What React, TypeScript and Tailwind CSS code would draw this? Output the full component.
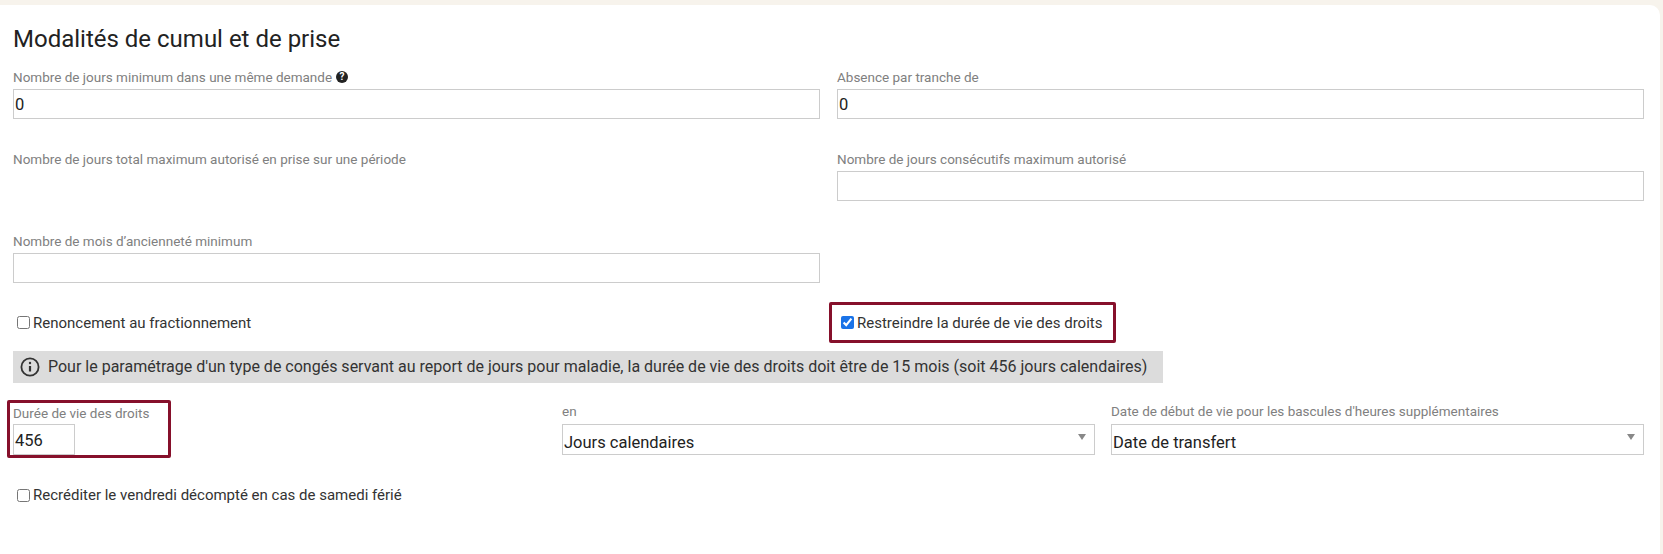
import React from "react";

const labelCls = "block text-[13.5px] leading-[18px] text-[#808080] font-normal";
const inputCls = "block w-full h-[30px] border border-[#cccccc] bg-white px-[1px] text-[16.5px] leading-[29px] text-[#222222]";

const Field = ({ label, value, children }: { label: string; value?: string; children?: React.ReactNode }) => (
  <div>
    <div className={`${labelCls} flex items-center gap-1 h-[18px] mb-[3px]`}>
      {label}
      {children}
    </div>
    <div className={inputCls}>{value}</div>
  </div>
);

const Select = ({ label, value }: { label: string; value: string }) => (
  <div>
    <div className={`${labelCls} h-[18px] mb-[4px]`}>{label}</div>
    <div className="relative h-[31px] border border-[#cccccc] bg-white px-[1px] text-[16.5px] leading-[35px] text-[#222222]">
      {value}
      <span className="absolute right-[8px] top-[9px] w-0 h-0 border-x-[4px] border-x-transparent border-t-[6px] border-t-[#888888]" />
    </div>
  </div>
);

const Check = ({ label, checked }: { label: string; checked?: boolean }) => (
  <label className="flex items-center gap-[3px] text-[15px] leading-[20px] text-[#333333]">
    <input type="checkbox" defaultChecked={checked} className="w-[13px] h-[13px] m-0 accent-[#1a73e8]" />
    {label}
  </label>
);

export default function App() {
  return (
    <div className="h-[554px] bg-[#f7f3ec] pt-[5px] pr-[3px] font-['Roboto',sans-serif] overflow-hidden">
      <div className="h-[549px] bg-white rounded-tr-[10px] pl-[13px] pr-[16px]">
        <h2 className="pt-[19px] text-[24px] leading-[30px] text-[#222222] font-normal">Modalités de cumul et de prise</h2>

        <div className="grid grid-cols-2 gap-x-[17px] mt-[14px]">
          <Field label="Nombre de jours minimum dans une même demande" value="0">
            <span className="w-[12px] h-[12px] rounded-full bg-[#222222] text-white text-[10px] leading-[12px] text-center font-bold">?</span>
          </Field>
          <Field label="Absence par tranche de" value="0" />
        </div>

        <div className="grid grid-cols-2 gap-x-[17px] mt-[31px]">
          <div className={labelCls}>Nombre de jours total maximum autorisé en prise sur une période</div>
          <Field label="Nombre de jours consécutifs maximum autorisé" />
        </div>

        <div className="grid grid-cols-2 gap-x-[17px] mt-[31px]">
          <Field label="Nombre de mois d’ancienneté minimum" />
        </div>

        <div className="grid grid-cols-2 gap-x-[17px] mt-[19px] items-center">
          <div className="pl-[4px]">
            <Check label="Renoncement au fractionnement" />
          </div>
          <div className="-ml-[8px] w-[287px] h-[41px] border-[3px] border-[#86102b] rounded-[2px] flex items-center pl-[9px]">
            <Check label="Restreindre la durée de vie des droits" checked />
          </div>
        </div>

        <div className="w-[1150px] h-[32px] mt-[8px] bg-[#dcdcdc] flex items-center gap-[8px] pl-[7px] text-[16px] text-[#333333]">
          <svg width="20" height="20" viewBox="0 0 20 20" fill="none" stroke="#333333" strokeWidth="1.8">
            <circle cx="10" cy="10" r="8.6" />
            <path d="M10 9v5.5" strokeWidth="2.2" />
            <circle cx="10" cy="6" r="1.2" fill="#333333" stroke="none" />
          </svg>
          Pour le paramétrage d'un type de congés servant au report de jours pour maladie, la durée de vie des droits doit être de 15 mois (soit 456 jours calendaires)
        </div>

        <div className="flex mt-[17px] h-[58px]">
          <div className="-ml-[6px] w-[164px] h-[58px] border-[3px] border-[#86102b] rounded-[2px] pl-[3px] pt-[1px] shrink-0">
            <div className={`${labelCls} h-[20px]`}>Durée de vie des droits</div>
            <div className="w-[62px] h-[31px] border border-[#cccccc] px-[1px] text-[16.5px] leading-[32px] text-[#222222]">456</div>
          </div>
          <div className="ml-[391px] grid grid-cols-2 gap-x-[16px] flex-1 pt-[2px]">
            <Select label="en" value="Jours calendaires" />
            <Select label="Date de début de vie pour les bascules d'heures supplémentaires" value="Date de transfert" />
          </div>
        </div>

        <div className="pl-[4px] mt-[27px]">
          <Check label="Recréditer le vendredi décompté en cas de samedi férié" />
        </div>
      </div>
    </div>
  );
}
